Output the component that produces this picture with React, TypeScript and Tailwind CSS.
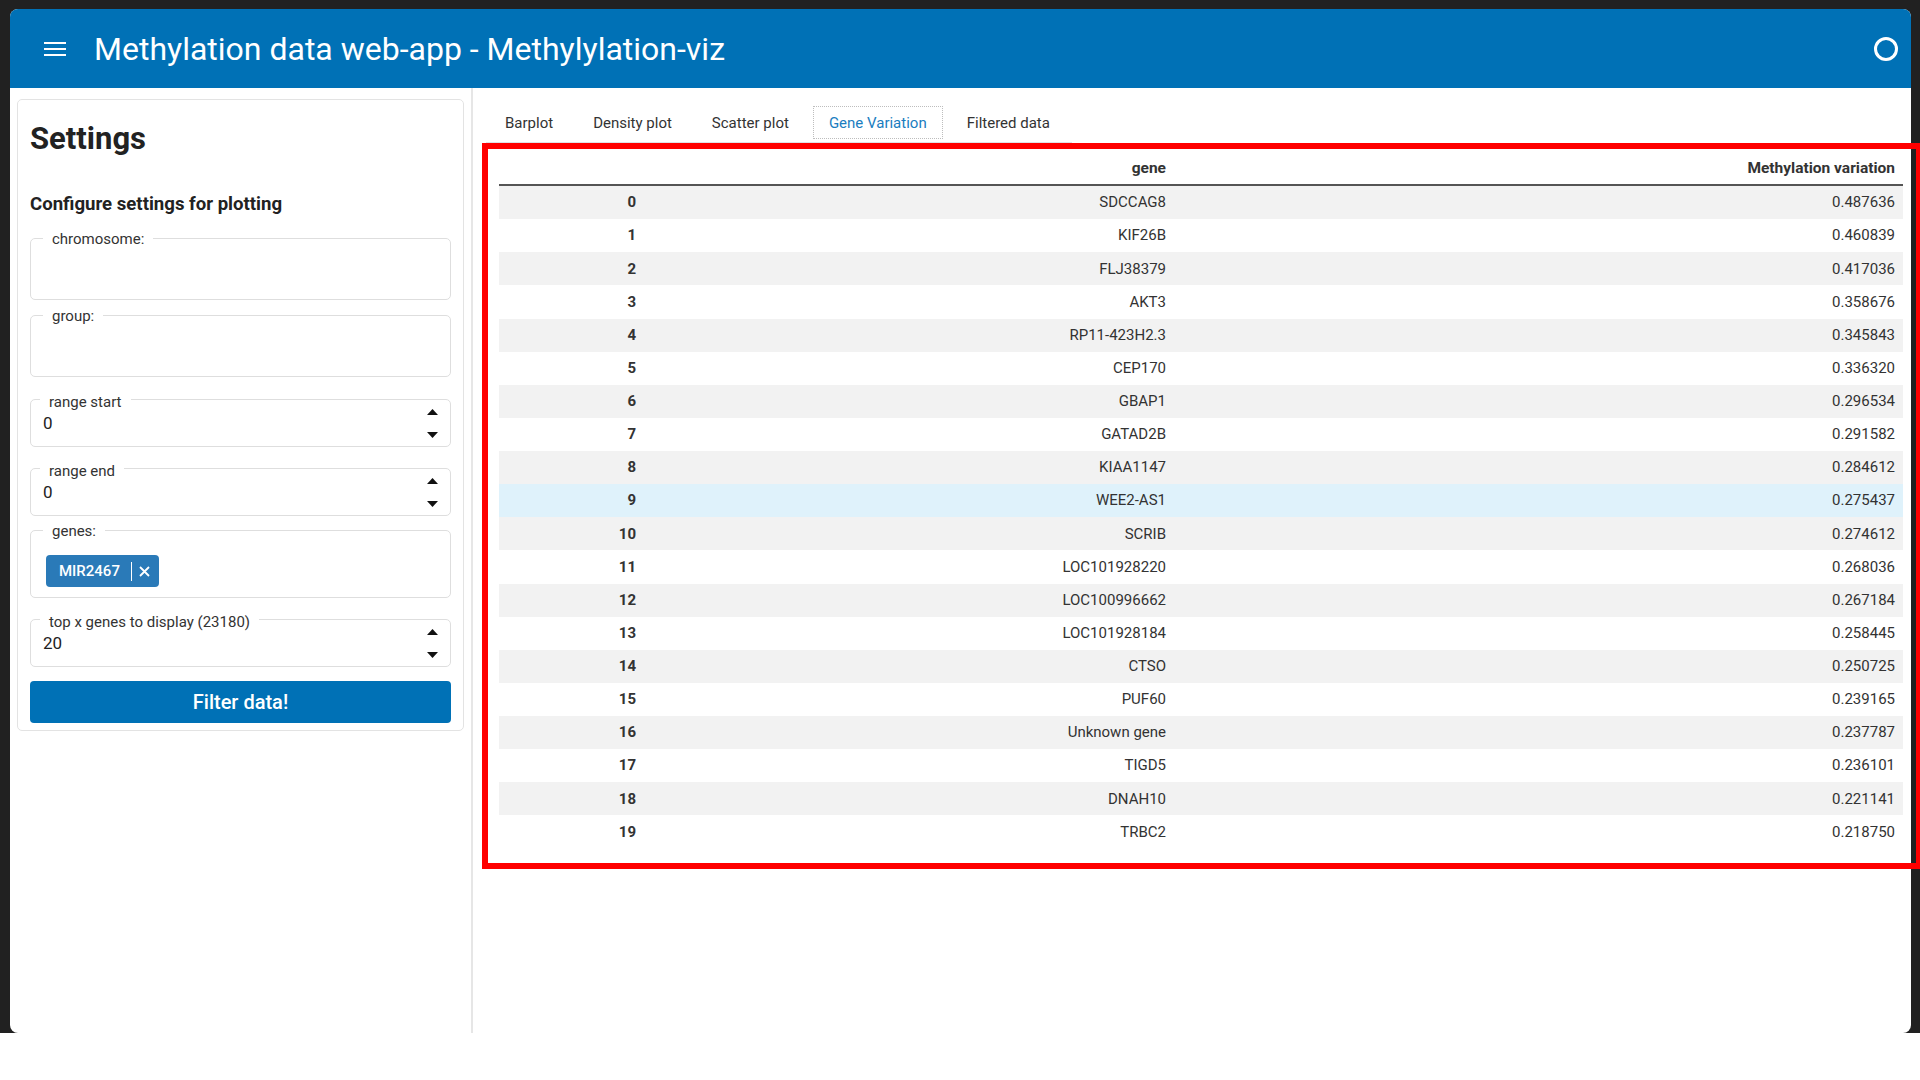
const rows: [string, string][] = [
  ['SDCCAG8', '0.487636'],
  ['KIF26B', '0.460839'],
  ['FLJ38379', '0.417036'],
  ['AKT3', '0.358676'],
  ['RP11-423H2.3', '0.345843'],
  ['CEP170', '0.336320'],
  ['GBAP1', '0.296534'],
  ['GATAD2B', '0.291582'],
  ['KIAA1147', '0.284612'],
  ['WEE2-AS1', '0.275437'],
  ['SCRIB', '0.274612'],
  ['LOC101928220', '0.268036'],
  ['LOC100996662', '0.267184'],
  ['LOC101928184', '0.258445'],
  ['CTSO', '0.250725'],
  ['PUF60', '0.239165'],
  ['Unknown gene', '0.237787'],
  ['TIGD5', '0.236101'],
  ['DNAH10', '0.221141'],
  ['TRBC2', '0.218750'],
];

const tabs = ['Barplot', 'Density plot', 'Scatter plot', 'Gene Variation', 'Filtered data'];

function Arrow({ down }: { down?: boolean }) {
  return (
    <svg width="11" height="6" viewBox="0 0 11 6">
      <path d={down ? 'M0 0 H11 L5.5 6 Z' : 'M0 6 H11 L5.5 0 Z'} fill="#111" />
    </svg>
  );
}

function TextField({ label, className }: { label: string; className: string }) {
  return (
    <div className={'relative border border-[#dedede] rounded-[5px] h-[62px] ' + className}>
      <span className="absolute left-[12px] top-[-11px] px-[9px] bg-white text-[15px] leading-[22px] text-[#333]">
        {label}
      </span>
    </div>
  );
}

function NumberField({ label, value, className }: { label: string; value: string; className: string }) {
  return (
    <div className={'relative border border-[#dedede] rounded-[5px] h-[48px] flex items-center pl-[12px] pr-[12px] ' + className}>
      <span className="absolute left-[9px] top-[-9px] px-[9px] bg-white text-[15px] leading-[22px] text-[#333]">
        {label}
      </span>
      <span className="flex-1 text-[17px] text-[#222] pt-[1px]">{value}</span>
      <div className="flex flex-col gap-[17px]">
        <Arrow />
        <Arrow down />
      </div>
    </div>
  );
}

export default function App() {
  return (
    <div className="relative w-[1920px] h-[1080px] bg-white overflow-hidden font-[Roboto,sans-serif]">
      <div className="h-[1033px] bg-[#212121] pl-[10px] pr-[9px] pt-[9px] flex">
        <div className="flex-1 flex flex-col bg-white rounded-[8px] overflow-hidden">
          <header className="h-[79px] bg-[#0071b6] flex items-center pl-[34px] pr-[13px]">
            <div className="w-[22px] flex flex-col gap-[4px]">
              <div className="h-[2px] bg-white" />
              <div className="h-[2px] bg-white" />
              <div className="h-[2px] bg-white" />
            </div>
            <h1 className="ml-[28px] text-[32px] leading-[38px] text-white flex-1">
              Methylation data web-app - Methylylation-viz
            </h1>
            <div className="w-[24px] h-[24px] rounded-full border-[3px] border-white" />
          </header>

          <div className="flex flex-1">
            <aside className="w-[463px] border-r-2 border-[#e6e6e6] pl-[7px] pt-[11px]">
              <div className="w-[447px] border border-[#e3e3e3] rounded-[5px] px-[12px] pt-[20px] pb-[7px]">
                <h2 className="text-[31px] leading-[37px] font-bold text-[#222]">Settings</h2>
                <h3 className="mt-[36px] text-[18.6px] leading-[22px] font-bold text-[#222]">
                  Configure settings for plotting
                </h3>
                <TextField label="chromosome:" className="mt-[23px]" />
                <TextField label="group:" className="mt-[15px]" />
                <NumberField label="range start" value="0" className="mt-[22px]" />
                <NumberField label="range end" value="0" className="mt-[21px]" />
                <div className="relative mt-[14px] border border-[#dedede] rounded-[5px] h-[68px] pl-[15px] pt-[24px]">
                  <span className="absolute left-[12px] top-[-11px] px-[9px] bg-white text-[15px] leading-[22px] text-[#333]">
                    genes:
                  </span>
                  <div className="inline-flex items-center h-[32px] rounded-[4px] bg-[#2a7ab8] text-white pl-[13px] pr-[9px]">
                    <span className="text-[15px] font-medium">MIR2467</span>
                    <span className="ml-[11px] w-[1px] h-[19px] bg-white" />
                    <svg className="ml-[7px]" width="11" height="11" viewBox="0 0 11 11">
                      <path d="M1 1 L10 10 M10 1 L1 10" stroke="white" strokeWidth="1.8" />
                    </svg>
                  </div>
                </div>
                <NumberField label="top x genes to display (23180)" value="20" className="mt-[21px]" />
                <button className="mt-[14px] w-full h-[42px] rounded-[4px] bg-[#0071b6] text-white text-[20px] font-medium">
                  Filter data!
                </button>
              </div>
            </aside>

            <main className="flex-1 pl-[13px] pt-[18px]">
              <nav className="w-fit flex gap-[8px] pl-[3px] pr-[6px] pb-[3px] border-b border-[#dee2e6]">
                {tabs.map((t) => (
                  <div
                    key={t}
                    className={
                      t === 'Gene Variation'
                        ? 'h-[33px] px-[15px] pt-[2px] flex items-center text-[15px] text-[#1a7dc0] border border-dotted border-[#bdbdbd]'
                        : 'h-[33px] px-[16px] pt-[2px] flex items-center text-[15px] text-[#333]'
                    }
                  >
                    {t}
                  </div>
                ))}
              </nav>

              <div className="ml-[13px] mt-[9px] w-[1404px] text-[15px] text-[#333]">
                <div className="grid grid-cols-[145px_530px_729px] h-[34px] pt-[2px] items-center border-b-2 border-[#555] font-bold text-[15.5px]">
                  <div />
                  <div className="text-right pr-[8px]">gene</div>
                  <div className="text-right pr-[8px]">Methylation variation</div>
                </div>
                {rows.map(([gene, val], i) => (
                  <div
                    key={i}
                    className={
                      'grid grid-cols-[145px_530px_729px] h-[33.13px] items-center ' +
                      (i === 9 ? 'bg-[#dff2fb]' : i % 2 === 0 ? 'bg-[#f2f2f2]' : 'bg-white')
                    }
                  >
                    <div className="text-right pr-[8px] font-bold">{i}</div>
                    <div className="text-right pr-[8px]">{gene}</div>
                    <div className="text-right pr-[8px]">{val}</div>
                  </div>
                ))}
              </div>
            </main>
          </div>
        </div>
      </div>

      {/* annotation rectangle drawn over the screenshot */}
      <div className="absolute left-[482px] top-[143px] w-[1440px] h-[726px] border-[6px] border-[#ff0000] pointer-events-none" />
    </div>
  );
}
